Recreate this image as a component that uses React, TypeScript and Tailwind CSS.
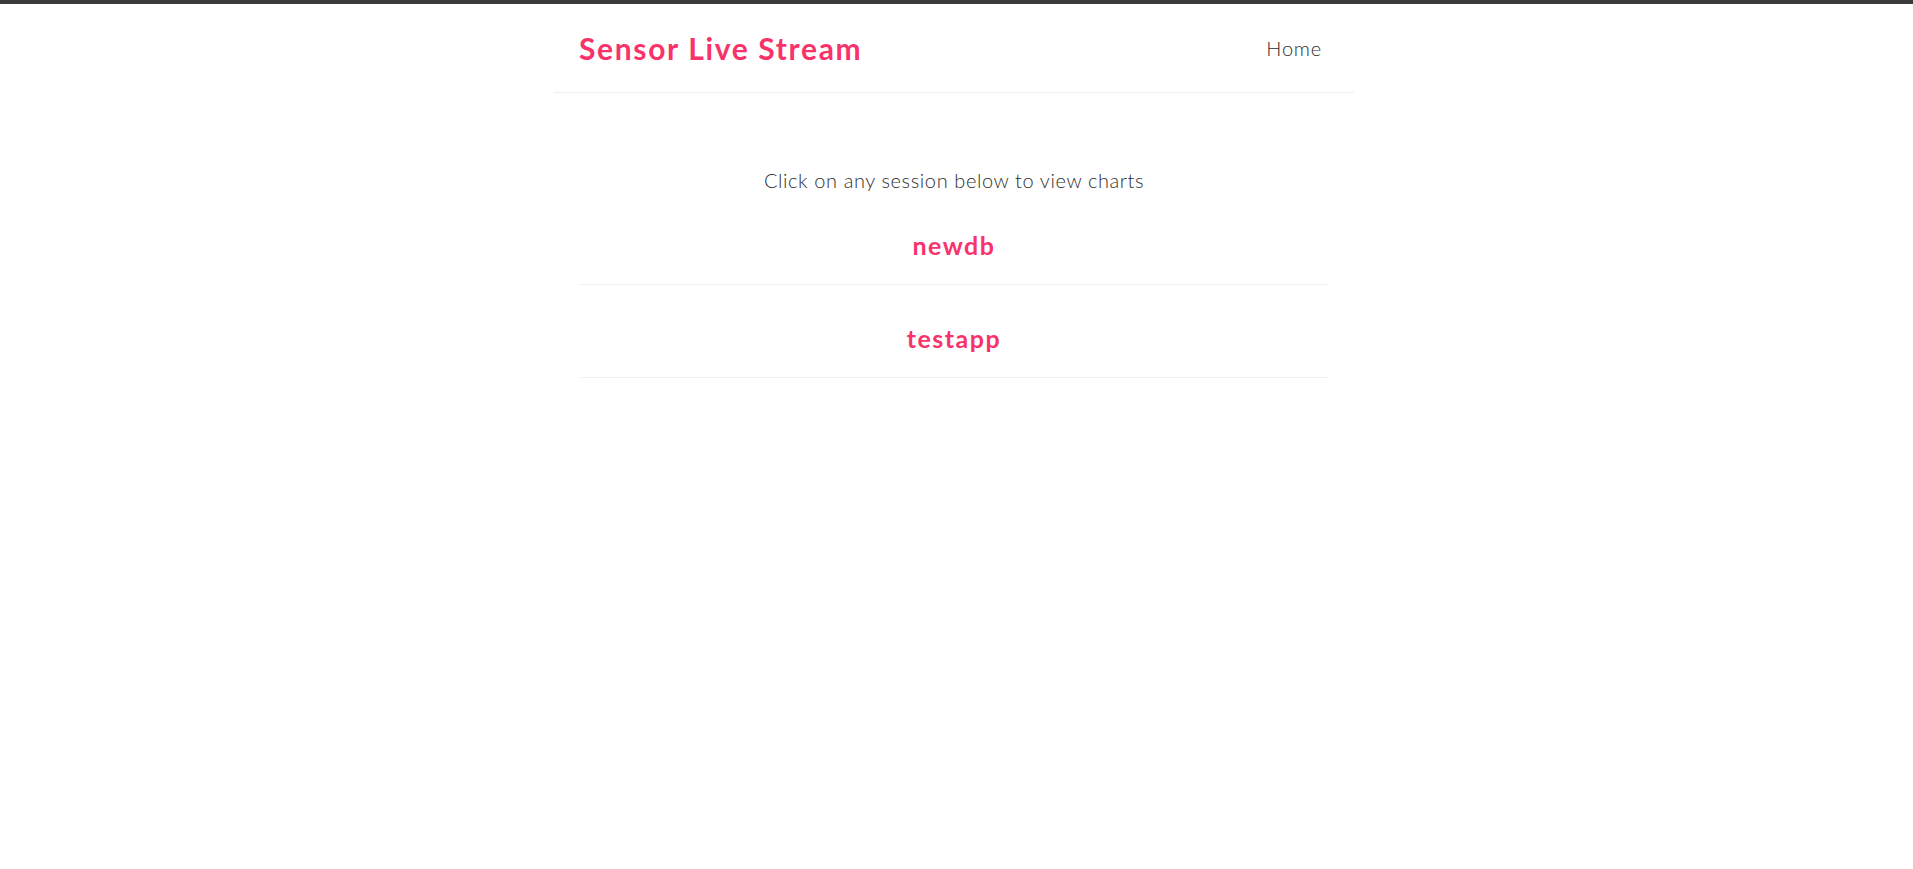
import React from "react";

export default function App() {
  const sessions = ["newdb", "testapp"];
  return (
    <div className="min-h-[869px] bg-white" style={{ fontFamily: "Lato, 'Noto Sans', sans-serif" }}>
      <div className="h-[4px] bg-[#3b3b3b]" />
      <div className="flex w-full justify-center pr-[5px]">
        <div className="w-[800px]">
          <header className="flex h-[89px] items-center justify-between border-b border-[#eeeeee] pl-[25px] pr-[32px]">
            <a className="text-[30px] font-bold leading-none tracking-[1.65px] text-[#f8336b]">Sensor Live Stream</a>
            <a className="text-[20px] font-light leading-none tracking-[0.8px] text-[#2e2e2e]">Home</a>
          </header>
          <main className="px-[25px] pt-[75px] text-center">
            <p className="text-[20px] font-light leading-[24px] tracking-[0.6px] text-[#2e2e2e]">Click on any session below to view charts</p>
            <ul>
              {sessions.map((s) => (
                <li key={s} className="border-b border-[#f2f2f2] pt-[38px] pb-[23px]">
                  <a className="text-[25px] font-bold leading-[30px] tracking-[1.5px] text-[#f8336b]">{s}</a>
                </li>
              ))}
            </ul>
          </main>
        </div>
      </div>
    </div>
  );
}
